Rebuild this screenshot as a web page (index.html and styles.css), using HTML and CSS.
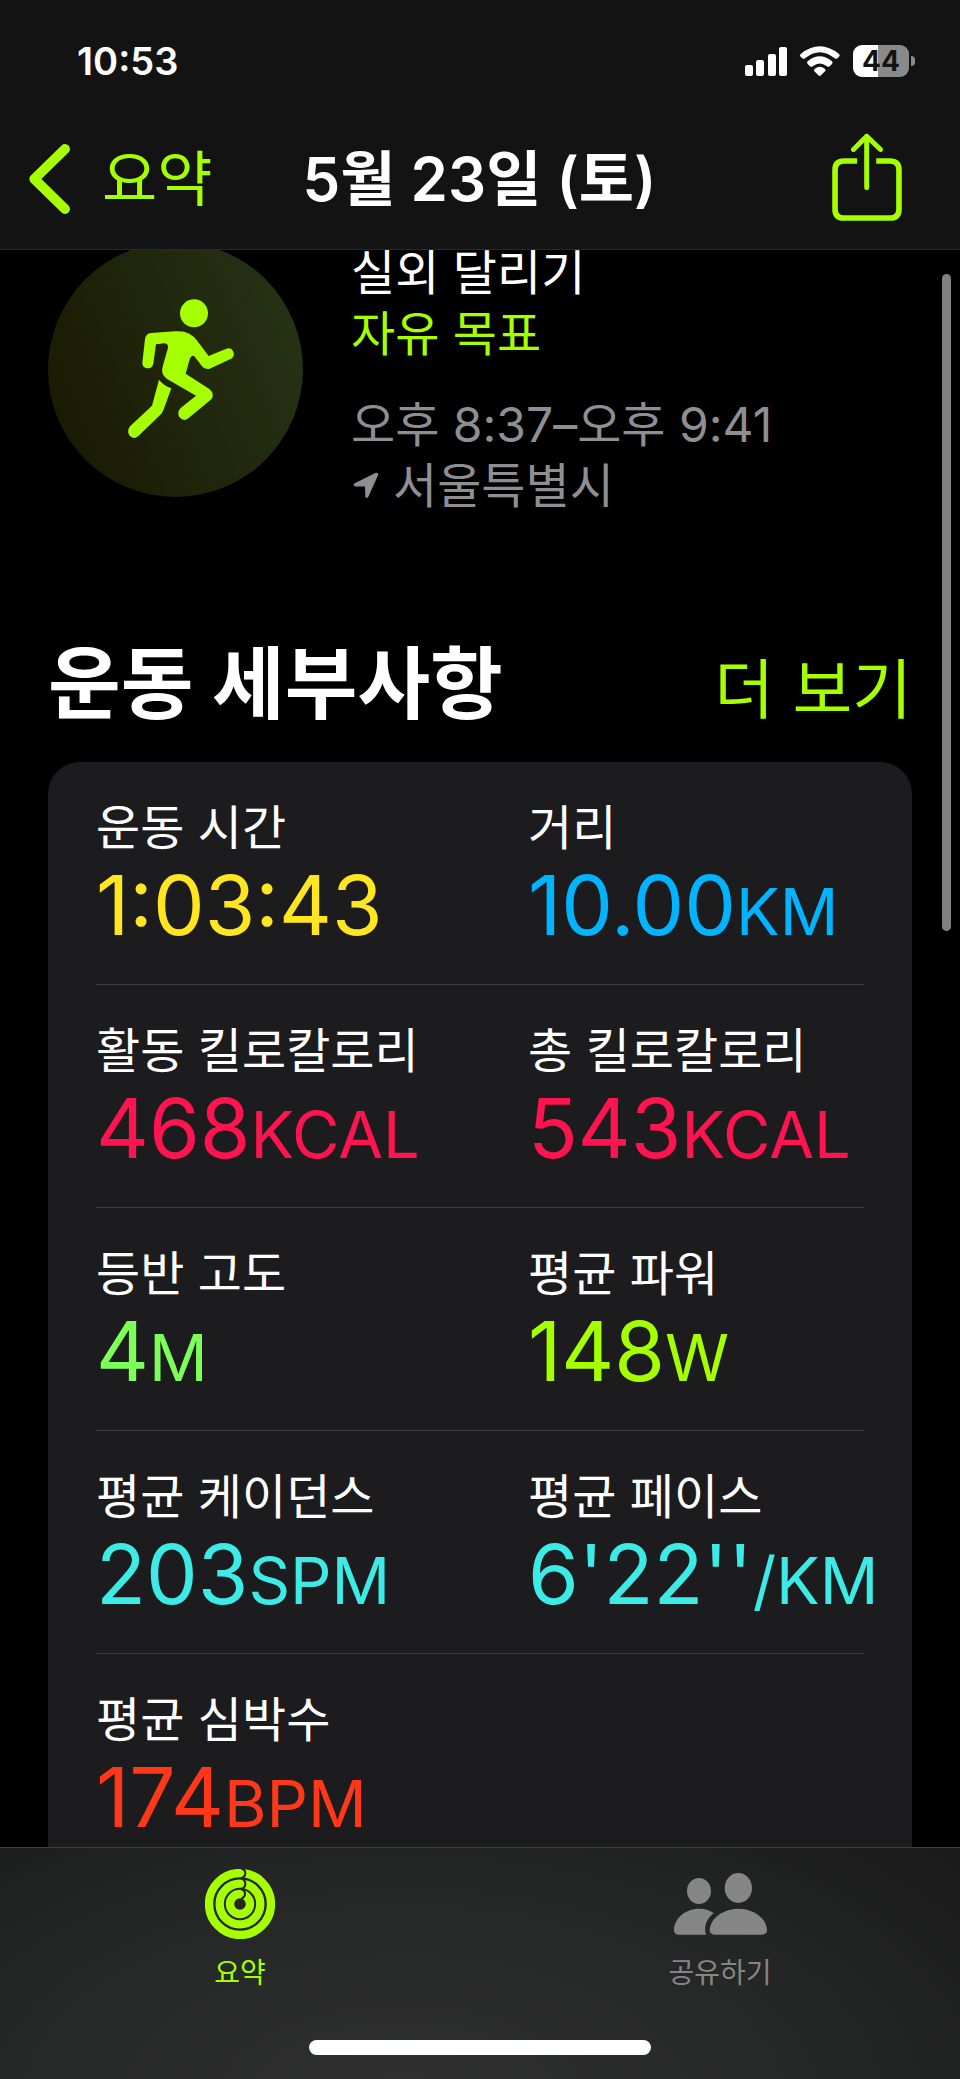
FILE: index.html
```
<!DOCTYPE html>
<html lang="ko">
<head>
    <meta charset="UTF-8">
    <meta name="viewport" content="width=device-width, initial-scale=1.0">
    <title>5월 23일 (토)</title>
    <link rel="stylesheet" href="styles.css">
</head>
<body>
    <header>
        <div class="status-bar">
            <span class="time">10:53</span>
            <div class="status-icons">
                <svg class="signal" viewBox="0 0 42 29">
                    <rect x="0" y="18" width="8" height="11" rx="2"/>
                    <rect x="11" y="13" width="8" height="16" rx="2"/>
                    <rect x="23" y="7" width="8" height="22" rx="2"/>
                    <rect x="34" y="0" width="8" height="29" rx="2"/>
                </svg>
                <svg class="wifi" viewBox="960 135 120 90">
                    <path d="M962 159 Q1019 113 1077 159 Q1081 163 1077 167 L1072 172 Q1068 175 1064 172 Q1019 135 975 172 Q971 175 967 172 L962 167 Q958 163 962 159Z"/>
                    <path d="M983 181 Q1019 151 1056 181 Q1060 185 1056 189 L1049 196 Q1045 199 1041 196 Q1019 179 998 196 Q994 199 990 196 L983 189 Q979 185 983 181Z"/>
                    <path d="M1005 203 Q1019 192 1034 203 Q1039 207 1035 211 L1023 223 Q1019 227 1015 223 L1003 211 Q1000 207 1005 203Z"/>
                </svg>
                <div class="battery"><span class="level">44</span></div>
            </div>
        </div>
        <div class="nav-bar">
            <a class="back" href="#">
                <svg viewBox="86 431 124 212">
                    <path d="M195 446 L102 537 L195 628"/>
                </svg>
                요약
            </a>
            <h1>5월 23일 (토)</h1>
            <button class="share" aria-label="공유">
                <svg viewBox="1055 397 212 267">
                    <path d="M1131 482 H1091 Q1064 482 1064 509 V628 Q1064 655 1091 655 H1231 Q1258 655 1258 628 V509 Q1258 482 1231 482 H1189"/>
                    <path class="arrow" d="M1160 563 V407 M1120 447 L1160 407 L1202 447"/>
                </svg>
            </button>
        </div>
    </header>

    <main>
        <section class="workout">
            <svg class="activity" viewBox="144 5 765 765">
                <defs>
                    <linearGradient id="badge" x1="0" y1="0.7" x2="1" y2="0.3">
                        <stop offset="0" stop-color="#191a02"/>
                        <stop offset="1" stop-color="#273215"/>
                    </linearGradient>
                </defs>
                <circle cx="526.5" cy="387.5" r="382.5" fill="url(#badge)"/>
                <g class="runner">
                    <circle cx="582" cy="219" r="42"/>
                    <path d="M453 278 L525 273 Q570 269 592 302 L626 347 L679 325 Q695 320 701 337 Q704 350 690 357 L629 385 Q615 389 606 378 L585 350 Q576 341 570 354 L557 400 L628 446 Q645 461 634 477 L565 534 Q550 545 538 530 Q530 515 542 503 L588 466 L500 415 Q483 402 487 382 L504 322 Q505 310 494 309 L468 312 L460 370 Q456 385 442 384 Q427 382 427 367 L435 296 Q438 280 453 278Z"/>
                    <path d="M477 418 Q490 435 514 444 L490 510 Q487 518 481 523 L416 586 Q400 600 388 585 Q379 570 391 557 L456 496Z"/>
                </g>
            </svg>
            <div class="info">
                <p>실외 달리기</p>
                <p class="goal">자유 목표</p>
                <p class="when">오후 8:37–오후 9:41</p>
                <p class="where">
                    <svg viewBox="1053 705 82 80">
                        <path d="M1062 739 L1126 707 Q1134 706 1133 714 L1104 778 Q1099 786 1095 779 L1094 748 L1065 748 Q1058 744 1062 739Z"/>
                    </svg>
                    서울특별시
                </p>
            </div>
        </section>

        <section class="details">
            <div class="details-title">
                <h2>운동 세부사항</h2>
                <a href="#">더 보기</a>
            </div>
            <div class="card">
                <dl class="row">
                    <div class="stat yellow"><dt>운동 시간</dt><dd>1:03:43</dd></div>
                    <div class="stat blue"><dt>거리</dt><dd>10.00<span>KM</span></dd></div>
                </dl>
                <dl class="row">
                    <div class="stat pink"><dt>활동 킬로칼로리</dt><dd>468<span>KCAL</span></dd></div>
                    <div class="stat pink"><dt>총 킬로칼로리</dt><dd>543<span>KCAL</span></dd></div>
                </dl>
                <dl class="row">
                    <div class="stat green"><dt>등반 고도</dt><dd>4<span>M</span></dd></div>
                    <div class="stat lime"><dt>평균 파워</dt><dd>148<span>W</span></dd></div>
                </dl>
                <dl class="row">
                    <div class="stat cyan"><dt>평균 케이던스</dt><dd>203<span>SPM</span></dd></div>
                    <div class="stat cyan"><dt>평균 페이스</dt><dd>6'22''<span>/KM</span></dd></div>
                </dl>
                <dl class="row">
                    <div class="stat red"><dt>평균 심박수</dt><dd>174<span>BPM</span></dd></div>
                </dl>
            </div>
        </section>
        <div class="scrollbar"></div>
    </main>

    <footer>
        <nav class="tabs">
            <a class="tab active" href="#">
                <svg class="rings" viewBox="615 147 210 210">
                    <circle cx="720" cy="252" r="93"/>
                    <circle cx="720" cy="252" r="61"/>
                    <circle cx="720" cy="252" r="30"/>
                    <path class="gap" d="M724 147 Q736 148 736 159 Q736 172 722 175 Q736 179 736 191 Q736 204 722 207 Q736 211 735 222 Q734 233 724 236"/>
                </svg>
                요약
            </a>
            <a class="tab" href="#">
                <svg class="people" viewBox="579 147 279 210">
                    <ellipse cx="654" cy="213" rx="36" ry="39"/>
                    <ellipse cx="772" cy="204" rx="41" ry="45"/>
                    <path d="M592 344 Q579 343 579 330 C580 292 616 266 654 266 Q680 266 698 279 C678 296 667 318 675 344Z"/>
                    <path d="M701 344 Q686 343 686 330 C688 292 730 266 772 266 C815 266 856 292 858 330 Q858 343 843 344Z"/>
                </svg>
                공유하기
            </a>
        </nav>
        <div class="home-indicator"></div>
    </footer>
</body>
</html>
```

FILE: styles.css
```
* {
    box-sizing: border-box;
}

body {
    font-family: 'Inter', 'Noto Sans CJK KR', sans-serif;
    margin: 0;
    height: 100vh;
    display: flex;
    flex-direction: column;
    background: #000;
    color: #fff;
    overflow: hidden;
}

h1, h2, p, dl, dd {
    margin: 0;
}

a {
    color: #a6ff00;
    text-decoration: none;
}

svg {
    display: block;
    flex: none;
}

/* header */

header {
    background: #131313;
    border-bottom: 1px solid #2b2b2b;
    position: relative;
    z-index: 1;
}

.status-bar {
    display: flex;
    justify-content: space-between;
    align-items: center;
    height: 122px;
    padding: 0 45px 0 77px;
}

.time {
    font-size: 38px;
    font-weight: 600;
}

.status-icons {
    display: flex;
    align-items: center;
    gap: 13px;
    fill: #fff;
}

.signal {
    width: 42px;
    height: 29px;
}

.wifi {
    width: 40px;
    height: 30px;
}

.battery {
    position: relative;
    width: 62px;
}

.battery::after {
    content: "";
    position: absolute;
    right: 0;
    top: 11px;
    width: 4px;
    height: 10px;
    border-radius: 0 5px 5px 0;
    background: #8a8a8a;
}

.level {
    display: block;
    width: 56px;
    border-radius: 9px;
    background: linear-gradient(to right, #fff 45%, #8a8a8a 45%);
    color: #131313;
    font-size: 28px;
    font-weight: 700;
    line-height: 32px;
    text-align: center;
}

.nav-bar {
    display: grid;
    grid-template-columns: 1fr auto 1fr;
    align-items: center;
    height: 127px;
    padding: 0 58px 14px 29px;
}

.back {
    display: flex;
    align-items: center;
    gap: 32px;
    font-size: 60px;
    line-height: 72px;
}

.back svg {
    width: 41px;
    height: 70px;
    fill: none;
    stroke: #a6ff00;
    stroke-width: 30;
    stroke-linecap: round;
    stroke-linejoin: round;
}

.nav-bar h1 {
    font-size: 60px;
    font-weight: 600;
    line-height: 72px;
    padding-left: 28px;
}

.share {
    justify-self: end;
    padding: 0 0 4px;
    border: none;
    background: none;
    cursor: pointer;
}

.share svg {
    width: 70px;
    height: 88px;
    fill: none;
    stroke: #a6ff00;
    stroke-width: 17;
}

.share .arrow {
    stroke-width: 15;
    stroke-linecap: round;
    stroke-linejoin: round;
}

/* content */

main {
    flex: 1;
    min-height: 0;
    margin-top: -8px;
    padding: 0 48px;
    overflow: hidden;
    position: relative;
}

.workout {
    display: flex;
    gap: 48px;
}

.activity {
    width: 255px;
    height: 255px;
}

.runner {
    fill: #a6ff00;
}

.info {
    font-size: 48px;
    line-height: 61px;
}

.goal {
    color: #a6ff00;
}

.when {
    margin-top: 30px;
    color: #8e8e93;
}

.where {
    display: flex;
    align-items: center;
    gap: 14px;
    color: #8e8e93;
    fill: #8e8e93;
}

.where svg {
    width: 28px;
    height: 27px;
}

.details-title {
    display: flex;
    justify-content: space-between;
    align-items: baseline;
    margin-top: 120px;
    margin-bottom: 24px;
    line-height: 96px;
}

.details-title h2 {
    font-size: 79px;
    font-weight: 700;
}

.details-title a {
    font-size: 65px;
}

.card {
    background: #1c1c1e;
    border-radius: 32px;
}

.row {
    display: grid;
    grid-template-columns: 1fr 1fr;
    position: relative;
    padding: 36px 0 31px;
}

.row::after {
    content: "";
    position: absolute;
    left: 48px;
    right: 48px;
    bottom: 0;
    height: 1px;
    background: #3d3d40;
}

.stat {
    padding-left: 48px;
    white-space: nowrap;
}

.stat dt {
    color: #fff;
    font-size: 48px;
    line-height: 60px;
}

.stat dd {
    font-size: 82px;
    line-height: 96px;
}

.stat span {
    font-size: 65px;
    line-height: 65px;
}

.yellow { color: #ffe620; }
.blue { color: #00b4ff; }
.pink { color: #ff1450; }
.green { color: #7dff5a; }
.lime { color: #a6ff00; }
.cyan { color: #3cebe6; }
.red { color: #ff3819; }

.scrollbar {
    position: absolute;
    top: 32px;
    right: 9px;
    width: 9px;
    height: 657px;
    border-radius: 5px;
    background: #808080;
}

/* tab bar */

footer {
    border-top: 1px solid #3f3f40;
    background: radial-gradient(ellipse 75% 160% at 42% 110%, #303031 0%, #252626 60%, #1b1b1b 100%);
    padding: 21px 0 24px;
}

.tabs {
    display: flex;
}

.tab {
    flex: 1;
    display: flex;
    flex-direction: column;
    align-items: center;
    gap: 17px;
    color: #868686;
    font-size: 28px;
    line-height: 34px;
}

.tab.active {
    color: #a6ff00;
}

.rings {
    width: 70px;
    height: 70px;
    fill: none;
    stroke: #a6ff00;
    stroke-width: 25;
}

.rings .gap {
    stroke: #232423;
    stroke-width: 6;
}

.people {
    width: 93px;
    height: 70px;
    fill: #868686;
}

.home-indicator {
    width: 342px;
    height: 15px;
    margin: 50px auto 0;
    border-radius: 8px;
    background: #fff;
}
```
